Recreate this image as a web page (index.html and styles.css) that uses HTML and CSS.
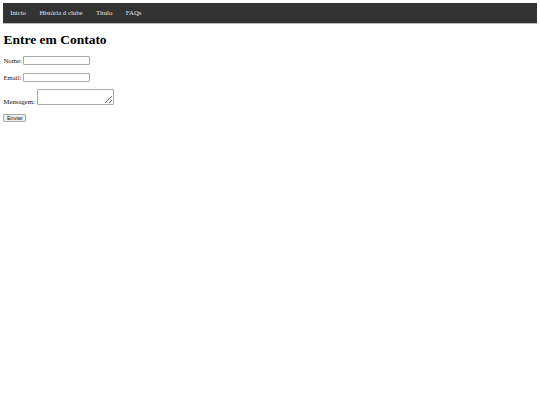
FILE: index.html
```html
<!DOCTYPE html>
<html lang="pt">
<head>
<meta charset="utf-8">
<title>Contato</title>
<link rel="stylesheet" href="styles.css">
</head>
<body class="page">
<nav class="nav">
  <a class="nav-link" href="#">Inicio</a>
  <a class="nav-link" href="#">História d clube</a>
  <a class="nav-link" href="#">Titulo</a>
  <a class="nav-link" href="#">FAQs</a>
</nav>
<h1 class="title">Entre em Contato</h1>
<form class="form">
  <div class="row"><label class="label" for="nome">Nome:</label> <input class="field" id="nome" type="text"></div>
  <div class="row"><label class="label" for="email">Email:</label> <input class="field" id="email" type="email"></div>
  <div class="row"><label class="label" for="msg">Mensagem:</label> <textarea class="area" id="msg"></textarea></div>
  <div class="row"><button class="btn" type="button">Enviar</button></div>
</form>
</body>
</html>
```
FILE: styles.css
```css
.page {
  margin: 3.4px;
  font-family: "Liberation Serif", "Times New Roman", serif;
  font-size: 6.75px;
  color: #000;
  background: #fff;
}
.nav {
  display: flex;
  background: #333;
  box-shadow: 0 0 0 0.5px #777;
}
.nav-link {
  color: #e6e6e6;
  text-decoration: none;
  padding: 5.9px 6.75px;
  line-height: 7.6px;
}
.title {
  font-size: 13.5px;
  font-weight: bold;
  line-height: 15.6px;
  margin: 8.9px 0;
}
.form { margin: 0; }
.row {
  margin-bottom: 7.6px;
  line-height: 7.8px;
}
.label { color: #111; }
.field {
  box-sizing: border-box;
  width: 67px;
  height: 9px;
  padding: 0 1px;
  border: 1px solid #a8a8a8;
  border-radius: 1px;
  font-size: 5.6px;
  vertical-align: baseline;
}
.area {
  box-sizing: border-box;
  width: 77px;
  height: 15.2px;
  padding: 0 1px;
  border: 1px solid #a8a8a8;
  border-radius: 1px;
  font-size: 5.6px;
  vertical-align: baseline;
  resize: both;
}
.btn {
  box-sizing: border-box;
  height: 8px;
  padding: 0 2.5px;
  font-family: "Liberation Sans", Arial, sans-serif;
  font-size: 5.6px;
  line-height: 6px;
  color: #111;
  background: #efefef;
  border: 1px solid #a8a8a8;
  border-radius: 1px;
}
```
